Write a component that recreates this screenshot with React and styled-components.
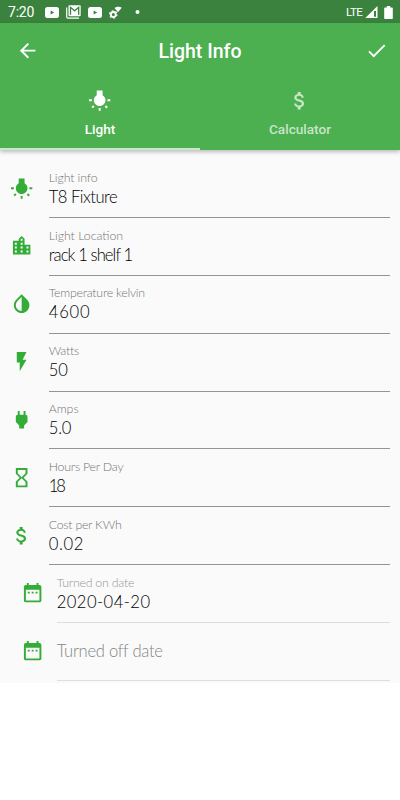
import styled, { createGlobalStyle } from 'styled-components'
import {
  MdArrowBack,
  MdAttachMoney,
  MdCheck,
  MdDateRange,
  MdFlashOn,
  MdHourglassEmpty,
  MdPower,
} from 'react-icons/md'

const GlobalStyle = createGlobalStyle`
  * {
    box-sizing: border-box;
  }
  body {
    margin: 0;
    background: #fff;
    font-family: Roboto, sans-serif;
  }
`

const Screen = styled.div`
  width: 400px;
  height: 800px;
  overflow: hidden;
`

const StatusBar = styled.div`
  height: 23px;
  padding: 1px 7px 0 8px;
  display: flex;
  align-items: center;
  justify-content: space-between;
  background: #3b823e;
  color: #fff;
`

const StatusGroup = styled.div`
  display: flex;
  align-items: center;
  gap: ${props => props.$gap}px;

  svg {
    display: block;
  }
`

const Clock = styled.span`
  width: 30px;
  font-size: 14px;
  line-height: 22px;
  letter-spacing: -0.2px;
`

const Network = styled.span`
  font-size: 11.5px;
  line-height: 22px;
  letter-spacing: -0.7px;
`

const BatterySlot = styled.span`
  margin-left: 3px;
`

const Header = styled.header`
  position: relative;
  background: #4caf50;
  color: #fff;
  box-shadow: 0 2px 4px rgba(0, 0, 0, 0.25);
`

const AppBar = styled.div`
  height: 55px;
  padding: 1px 12px 0 15.5px;
  display: flex;
  align-items: center;
  justify-content: space-between;

  svg {
    display: block;
  }
`

const Title = styled.h1`
  margin: 2px 3.5px 0 0;
  font-size: 19.5px;
  font-weight: 500;
  line-height: 24px;
`

const Tabs = styled.div`
  height: 72px;
  display: flex;
`

const Tab = styled.div`
  flex: 1;
  display: flex;
  flex-direction: column;
  align-items: center;
  padding-top: 10.5px;
  border-bottom: 2px solid ${props => (props.$active ? '#c9e7ca' : '#4caf50')};
  color: ${props => (props.$active ? '#fff' : 'rgba(255, 255, 255, 0.7)')};

  svg {
    display: block;
  }
`

const TabLabel = styled.span`
  margin-top: 8px;
  font-size: 13.6px;
  font-weight: 500;
  line-height: 18px;
`

const Form = styled.main`
  height: 533px;
  padding: 10.2px 10px 0;
  background: #fafafa;
  overflow: hidden;
`

const Row = styled.div`
  height: 57.85px;
  padding-left: ${props => (props.$inset ? 11.5 : 0)}px;
  display: flex;
`

const IconCell = styled.div`
  width: ${props => (props.$inset ? 35.5 : 39)}px;
  margin-left: -0.3px;
  padding-top: 16.4px;
  flex: none;
  color: #33ad37;

  svg {
    display: block;
  }
`

const Field = styled.div`
  flex: 1;
  padding-top: 9.6px;
  border-bottom: 1px solid ${props => (props.$inset ? '#dedede' : '#949494')};
  font-family: Lato, sans-serif;
  font-weight: 300;
  white-space: nowrap;
`

const Label = styled.div`
  color: ${props => (props.$light ? '#969696' : '#757575')};
  font-size: 12.3px;
  line-height: 16px;
  letter-spacing: ${props => props.$spacing || 0}px;
`

const Value = styled.div`
  margin-top: 1px;
  color: #000;
  font-size: 16.6px;
  line-height: 20px;
  letter-spacing: ${props => props.$spacing || 0}px;
`

const Placeholder = styled(Value)`
  margin-top: 8px;
  color: #858585;
`

function BulbIcon({ size = 23.3 }) {
  return (
    <svg width={size} height={size} viewBox="0 0 24 24" fill="currentColor">
      <path d="M3.55 18.54l1.41 1.41 1.8-1.79-1.41-1.41-1.8 1.79zM11 22.45h2V19.5h-2v2.95zM4 10.5H1v2h3v-2zm11-4.19V1.5H9v4.81C7.21 7.35 6 9.28 6 11.5c0 3.31 2.69 6 6 6s6-2.69 6-6c0-2.22-1.21-4.15-3-5.19zm5 4.19v2h3v-2h-3zm-2.76 7.66l1.79 1.8 1.41-1.41-1.8-1.79-1.4 1.4z" />
    </svg>
  )
}

function CityIcon({ size = 23.3 }) {
  return (
    <svg width={size} height={size} viewBox="0 0 24 24" fill="currentColor">
      <path d="M15 11V5l-3-3-3 3v2H3v14h18V11h-6zm-8 8H5v-2h2v2zm0-4H5v-2h2v2zm0-4H5V9h2v2zm6 8h-2v-2h2v2zm0-4h-2v-2h2v2zm0-4h-2V9h2v2zm0-4h-2V5h2v2zm6 12h-2v-2h2v2zm0-4h-2v-2h2v2z" />
    </svg>
  )
}

function ContrastIcon({ size = 23.3 }) {
  return (
    <svg width={size} height={size} viewBox="0 0 24 24" fill="currentColor">
      <path d="M17.66 7.93L12 2.27 6.34 7.93c-3.12 3.12-3.12 8.19 0 11.31C7.9 20.8 9.95 21.58 12 21.58s4.1-.78 5.66-2.34c3.12-3.12 3.12-8.19 0-11.31zM12 19.59c-1.6 0-3.11-.62-4.24-1.76C6.62 16.69 6 15.19 6 13.59s.62-3.11 1.76-4.24L12 5.1v14.49z" />
    </svg>
  )
}

function VideoIcon() {
  return (
    <svg width="14" height="11" viewBox="0 0 14 11">
      <rect width="14" height="11" rx="2.5" fill="#fff" />
      <path d="M5.6 3.4v4.2l3.6-2.1z" fill="#3b823e" />
    </svg>
  )
}

function MailIcon() {
  return (
    <svg width="15" height="14" viewBox="0 0 15 14" fill="none">
      <path d="M.7 2.5v9.3q0 1.4 1.4 1.4H13" stroke="#fff" strokeWidth="1.2" />
      <rect x="2.5" y="0.3" width="12.2" height="11" rx="1" fill="#fff" />
      <path d="M4.5 9.8V2.3l4.1 3.5 4.1-3.5v7.5" stroke="#3b823e" strokeWidth="1.3" />
    </svg>
  )
}

function GearIcon() {
  return (
    <svg width="13" height="13" viewBox="0 0 13 13" fill="none">
      <circle cx="4.3" cy="8.5" r="2.5" stroke="#fff" strokeWidth="1.8" />
      <circle cx="4.3" cy="8.5" r="3.7" stroke="#fff" strokeWidth="1.1" strokeDasharray="1.9 1.97" />
      <path d="M5.5 2.1C7.4.5 10.7.2 12.7 1.7L9 6.2Z" fill="#fff" />
    </svg>
  )
}

function SignalIcon() {
  return (
    <svg width="13" height="12" viewBox="0 0 13 12">
      <path d="M12.5 0v12H.3z" fill="#fff" />
      <path d="M9 5h2v5.8H9z" fill="#3b823e" />
    </svg>
  )
}

function BatteryIcon() {
  return (
    <svg width="9" height="13" viewBox="0 0 9 13" fill="#fff">
      <path d="M2.8 0h3.4v1.4H8q.8 0 .8.8v10q0 .8-.8.8H1q-.8 0-.8-.8v-10q0-.8.8-.8h1.8z" />
    </svg>
  )
}

const fields = [
  { icon: BulbIcon, label: 'Light info', value: 'T8 Fixture', labelSpacing: -0.1, valueSpacing: -0.5 },
  { icon: CityIcon, label: 'Light Location', value: 'rack 1 shelf 1', labelSpacing: 0, valueSpacing: -0.9 },
  { icon: ContrastIcon, label: 'Temperature kelvin', value: '4600', labelSpacing: -0.22, valueSpacing: 0.8 },
  { icon: MdFlashOn, label: 'Watts', value: '50', labelSpacing: -0.25, valueSpacing: 0 },
  { icon: MdPower, label: 'Amps', value: '5.0', labelSpacing: 0, valueSpacing: -0.2 },
  { icon: MdHourglassEmpty, label: 'Hours Per Day', value: '18', labelSpacing: -0.2, valueSpacing: -2 },
  { icon: MdAttachMoney, label: 'Cost per KWh', value: '0.02', labelSpacing: -0.23, valueSpacing: 0.6 },
  { icon: MdDateRange, label: 'Turned on date', value: '2020-04-20', inset: true, labelSpacing: -0.2, valueSpacing: 0.45 },
  { icon: MdDateRange, placeholder: 'Turned off date', inset: true, valueSpacing: -0.27 },
]

function FieldRow({ icon: Icon, label, value, placeholder, inset, labelSpacing, valueSpacing }) {
  return (
    <Row $inset={inset}>
      <IconCell $inset={inset}>
        <Icon size={23.3} />
      </IconCell>
      <Field $inset={inset}>
        {placeholder ? (
          <Placeholder $spacing={valueSpacing}>{placeholder}</Placeholder>
        ) : (
          <>
            <Label $light={inset} $spacing={labelSpacing}>{label}</Label>
            <Value $spacing={valueSpacing}>{value}</Value>
          </>
        )}
      </Field>
    </Row>
  )
}

export default function App() {
  return (
    <Screen>
      <GlobalStyle />
      <StatusBar>
        <StatusGroup $gap={7}>
          <Clock>7:20</Clock>
          <VideoIcon />
          <MailIcon />
          <VideoIcon />
          <GearIcon />
          <svg width="18" height="4" viewBox="0 0 18 4">
            <circle cx="8.5" cy="2" r="2" fill="#fff" />
          </svg>
        </StatusGroup>
        <StatusGroup $gap={3}>
          <Network>LTE</Network>
          <SignalIcon />
          <BatterySlot>
            <BatteryIcon />
          </BatterySlot>
        </StatusGroup>
      </StatusBar>
      <Header>
        <AppBar>
          <MdArrowBack size={23.3} />
          <Title>Light Info</Title>
          <MdCheck size={23.3} />
        </AppBar>
        <Tabs>
          <Tab $active>
            <BulbIcon />
            <TabLabel>Light</TabLabel>
          </Tab>
          <Tab>
            <MdAttachMoney size={23.3} />
            <TabLabel>Calculator</TabLabel>
          </Tab>
        </Tabs>
      </Header>
      <Form>
        {fields.map(field => (
          <FieldRow key={field.label || field.placeholder} {...field} />
        ))}
      </Form>
    </Screen>
  )
}
